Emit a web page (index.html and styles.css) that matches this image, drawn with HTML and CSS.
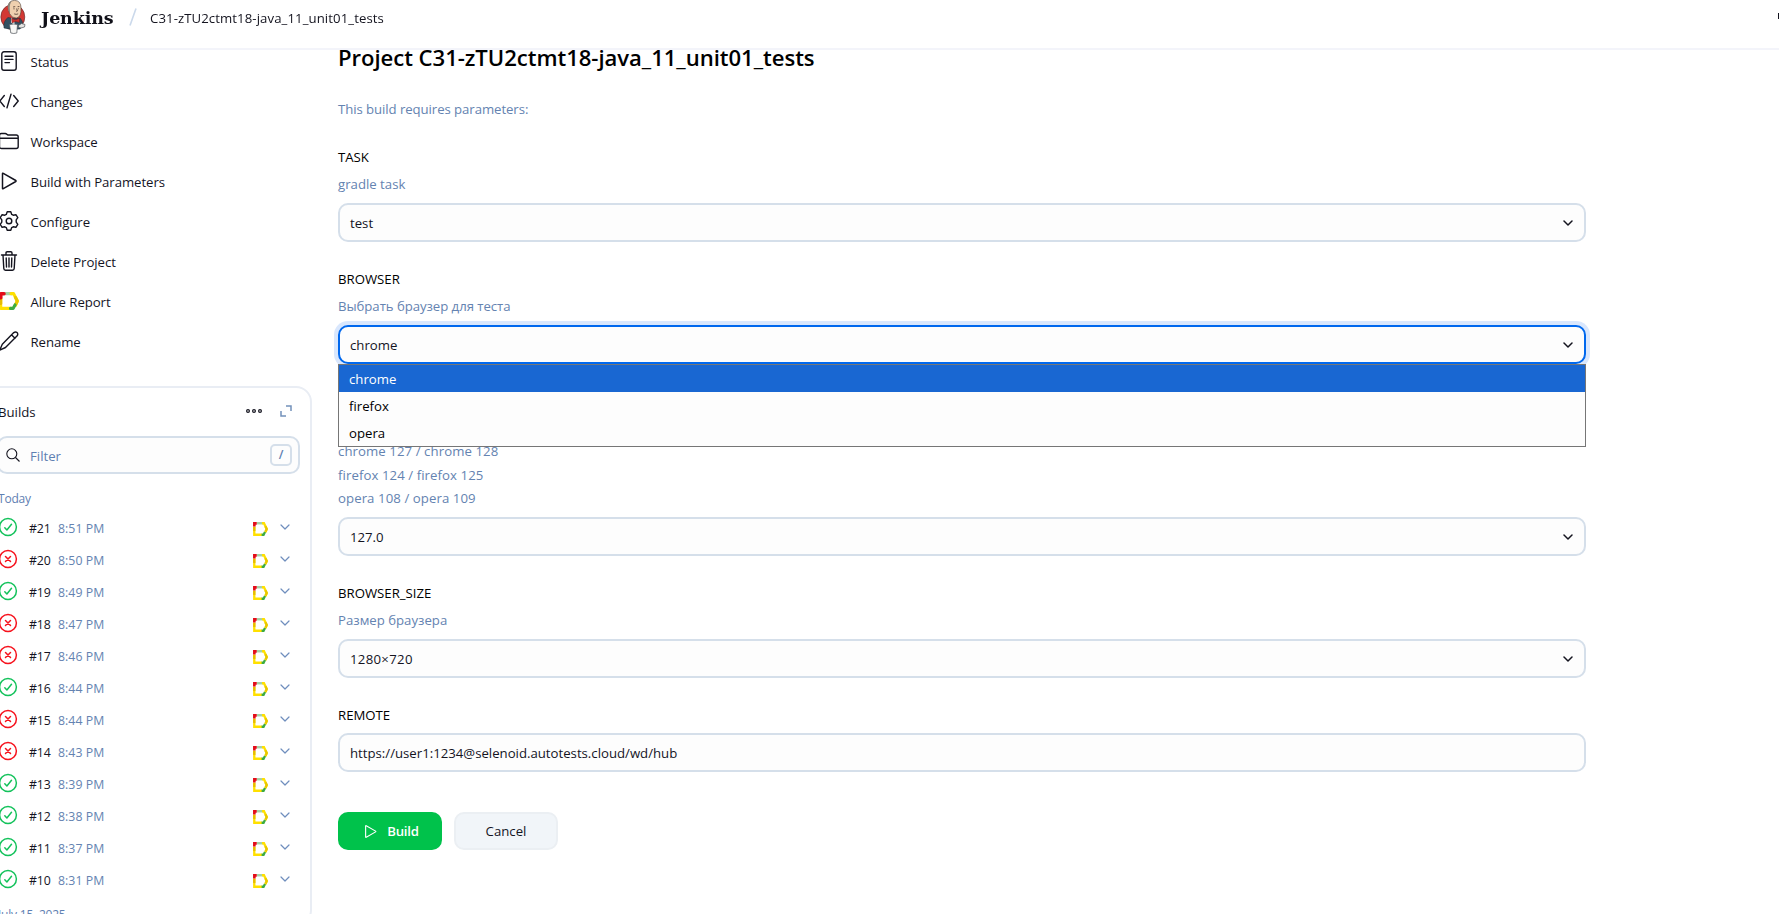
FILE: index.html
```
<!DOCTYPE html>
<html lang="en">
<head>
<meta charset="utf-8">
<title>Jenkins</title>
<link rel="stylesheet" href="styles.css">
</head>
<body>
<svg class="defs" aria-hidden="true">
  <symbol id="ok" viewBox="0 0 20 20"><g fill="none" stroke="#13c25b" stroke-linecap="round" stroke-linejoin="round"><circle cx="10" cy="10" r="8.4" stroke-width="1.5"/><path d="M6.8 10.7l2.1 2.2 4.6-5.6" stroke-width="1.5"/></g></symbol>
  <symbol id="bad" viewBox="0 0 20 20"><g fill="none" stroke="#f6121d" stroke-linecap="round"><circle cx="10" cy="10" r="8.4" stroke-width="1.5"/><path d="M7.5 7.5l5 5m0-5l-5 5" stroke-width="1.5"/></g></symbol>
  <symbol id="allure" viewBox="0 0 20 18" preserveAspectRatio="none"><g fill="none" stroke-width="3.1"><path d="M5 1.600h8" stroke="#a5d1a5"/><path d="M12 1.600h2.600L18.300 9l-2 4.500" stroke="#ffe000"/><path d="M16.500 5.500L18.300 9l-1.500 3.300" stroke="#e8c800"/><path d="M1.700 6v10.400h10.300" stroke="#ffe000"/><path d="M1.700 6v5.500" stroke="#e6bb00"/><path d="M11.500 16.400h2.600l1.900-3.500" stroke="#3cab43"/><path d="M5 1.800H1.800v4" stroke="#e40b18" stroke-width="3.500"/></g></symbol>
  <symbol id="chev" viewBox="0 0 10 6"><path d="M1 1l4 4 4-4" fill="none" stroke="currentColor" stroke-linecap="round" stroke-linejoin="round" stroke-width="var(--w,1.2)"/></symbol>
  <symbol id="play" viewBox="0 0 20 20"><path d="M3.500 2.800v14.400q0 .9.8.5l12.500-7.200q.7-.5 0-1l-12.500-7.200q-.8-.4-.8.5z" fill="none" stroke="currentColor" stroke-width="1.5" stroke-linejoin="round"/></symbol>
</svg>

<header class="header">
  <svg class="logo" viewBox="0 0 26 34">
    <ellipse cx="12.800" cy="17" rx="12" ry="12.600" fill="#d33833" stroke="#5d2a2a" stroke-width=".6"/>
    <path d="M4 28q-1-7 4-10.500l6 1 6-.5q3 3 3 7l-3 4q-10 1-16-1z" fill="#335061" stroke="#1c2f3a" stroke-width=".5"/>
    <path d="M8.500 8Q8 .5 14.500.4 21 .6 21 8q.6 9-4.500 10-4.500.5-7-4.500z" fill="#efd0af" stroke="#4a3c36" stroke-width=".6"/>
    <path d="M8.300 11Q6 2.500 12 .7 9.300 4 9.700 9.500l.300 3z" fill="#8b8278"/>
    <path d="M13 7l2.200-.4m2.400.1l1.800-.2M13.400 8.800h1.200m3.200 0h1M16.600 8.500l.8 2.500-1.200.3m-2 2.600q2 .9 4 0" stroke="#4a3730" stroke-width=".8" fill="none"/>
    <path d="M11 17.500l3 3 1 5-4-3z" fill="#fff"/>
    <path d="M11.500 18.500l4 1.300 4-1.600v4.200l-4-.9-3.500 1.400z" fill="#c9302c" stroke="#611" stroke-width=".4"/>
    <path d="M9.500 24.500q4-1 8 0l-.7 8.500q-3 1-6 0z" fill="#f7f7f5" stroke="#50545a" stroke-width=".7"/>
    <path d="M18.500 25.500l3-2 3.500 1-.5 2.500-3.500 1-2.500-.5z" fill="#e5e5e3" stroke="#50545a" stroke-width=".7"/>
  </svg>
  <span class="brand">Jenkins</span>
  <svg class="sep" viewBox="0 0 8 18"><path d="M7 .5L1 17.500" stroke="#cbd9eb" stroke-width="1.600"/></svg>
  <span class="crumb">C31-zTU2ctmt18-java_11_unit01_tests</span>
  <span class="edge"></span>
</header>

<div class="page">
<aside class="side">
  <nav class="tasks">
    <a class="task"><svg class="ico" viewBox="0 0 20 20"><rect x="2.800" y=".8" width="14.400" height="18.400" rx="2.200"/><path d="M6 5.200h8M6 8.400h8M6 11.600h4.500"/></svg><span>Status</span></a>
    <a class="task"><svg class="ico" viewBox="0 0 20 20"><path d="M5.300 4.500L.8 10l4.500 5.500M14.700 4.500l4.500 5.500-4.500 5.500M12 3.200L8 16.800"/></svg><span>Changes</span></a>
    <a class="task"><svg class="ico" viewBox="0 0 20 20"><path d="M.5 7V4.500q0-2 2-2h3.700q.8 0 1.500.6l.7.5q.5.400 1.300.4h7.500q2 0 2 2V15.500q0 2-2 2H2.500q-2 0-2-2zM.5 7.300h18.500"/></svg><span>Workspace</span></a>
    <a class="task"><svg class="ico"><use href="#play"/></svg><span>Build with Parameters</span></a>
    <a class="task"><svg class="ico" viewBox="0 0 20 20"><circle cx="10" cy="10" r="2.800"/><path d="M8.200.8h3.600l.9 2.600 1.500.8 2.700-.5 1.900 3-1.600 2.200v2.200l1.600 2.200-1.900 3-2.700-.5-1.500.8-.9 2.600H8.200l-.9-2.600-1.500-.8-2.700.5-1.900-3 1.600-2.200V8.900L1.200 6.700l1.900-3 2.700.5 1.500-.8z"/></svg><span>Configure</span></a>
    <a class="task"><svg class="ico" viewBox="0 0 20 20"><path d="M2.500 4h15M7 4V2q0-1.200 1.200-1.200h3.600Q13 .8 13 2v2M4 4l.8 13.500q.1 1.700 1.700 1.700h7q1.600 0 1.700-1.700L16 4M10 7v9M7.200 7l.3 9M12.800 7l-.3 9"/></svg><span>Delete Project</span></a>
    <a class="task"><svg class="ico allure-l"><use href="#allure"/></svg><span>Allure Report</span></a>
    <a class="task"><svg class="ico" viewBox="0 0 20 20"><path d="M14.800 1.600q1.800-1.400 3.200 0t.2 3.200L6.500 16.500.8 19l2.500-5.700zM12.700 4l3.300 3.300"/></svg><span>Rename</span></a>
  </nav>

  <section class="builds">
    <div class="bhead"><span class="btitle">Builds</span>
      <svg class="dots" viewBox="0 0 18 6"><g fill="none" stroke="#14141f" stroke-width="1.200"><circle cx="3" cy="3" r="1.400"/><circle cx="9" cy="3" r="1.400"/><circle cx="15" cy="3" r="1.400"/></g></svg>
      <svg class="expand" viewBox="0 0 12 12"><path d="M6 1h5v5M1 6v5h5" fill="none" stroke="#7391bb" stroke-width="1.500"/></svg>
    </div>
    <div class="filter"><svg class="mag" viewBox="0 0 14 14"><circle cx="5.800" cy="5.800" r="5" /><path d="M9.500 9.500l4 4"/></svg><span class="ftext">Filter</span><kbd class="key">/</kbd></div>
    <div class="day">Today</div>
    <ul class="list">
      <li class="row"><svg class="st"><use href="#ok"/></svg><b class="num">#21</b><span class="time">8:51 PM</span><svg class="al"><use href="#allure"/></svg><svg class="ch"><use href="#chev"/></svg></li>
      <li class="row"><svg class="st"><use href="#bad"/></svg><b class="num">#20</b><span class="time">8:50 PM</span><svg class="al"><use href="#allure"/></svg><svg class="ch"><use href="#chev"/></svg></li>
      <li class="row"><svg class="st"><use href="#ok"/></svg><b class="num">#19</b><span class="time">8:49 PM</span><svg class="al"><use href="#allure"/></svg><svg class="ch"><use href="#chev"/></svg></li>
      <li class="row"><svg class="st"><use href="#bad"/></svg><b class="num">#18</b><span class="time">8:47 PM</span><svg class="al"><use href="#allure"/></svg><svg class="ch"><use href="#chev"/></svg></li>
      <li class="row"><svg class="st"><use href="#bad"/></svg><b class="num">#17</b><span class="time">8:46 PM</span><svg class="al"><use href="#allure"/></svg><svg class="ch"><use href="#chev"/></svg></li>
      <li class="row"><svg class="st"><use href="#ok"/></svg><b class="num">#16</b><span class="time">8:44 PM</span><svg class="al"><use href="#allure"/></svg><svg class="ch"><use href="#chev"/></svg></li>
      <li class="row"><svg class="st"><use href="#bad"/></svg><b class="num">#15</b><span class="time">8:44 PM</span><svg class="al"><use href="#allure"/></svg><svg class="ch"><use href="#chev"/></svg></li>
      <li class="row"><svg class="st"><use href="#bad"/></svg><b class="num">#14</b><span class="time">8:43 PM</span><svg class="al"><use href="#allure"/></svg><svg class="ch"><use href="#chev"/></svg></li>
      <li class="row"><svg class="st"><use href="#ok"/></svg><b class="num">#13</b><span class="time">8:39 PM</span><svg class="al"><use href="#allure"/></svg><svg class="ch"><use href="#chev"/></svg></li>
      <li class="row"><svg class="st"><use href="#ok"/></svg><b class="num">#12</b><span class="time">8:38 PM</span><svg class="al"><use href="#allure"/></svg><svg class="ch"><use href="#chev"/></svg></li>
      <li class="row"><svg class="st"><use href="#ok"/></svg><b class="num">#11</b><span class="time">8:37 PM</span><svg class="al"><use href="#allure"/></svg><svg class="ch"><use href="#chev"/></svg></li>
      <li class="row"><svg class="st"><use href="#ok"/></svg><b class="num">#10</b><span class="time">8:31 PM</span><svg class="al"><use href="#allure"/></svg><svg class="ch"><use href="#chev"/></svg></li>
    </ul>
    <div class="day older">July 15, 2025</div>
  </section>
</aside>

<main class="main">
  <h1 class="title">Project C31-zTU2ctmt18-java_11_unit01_tests</h1>
  <p class="intro">This build requires parameters:</p>

  <div class="field"><div class="label">TASK</div><div class="desc">gradle task</div>
    <div class="box">test<svg class="arrow"><use href="#chev"/></svg></div></div>

  <div class="field"><div class="label">BROWSER</div><div class="desc ru">Выбрать браузер для теста</div>
    <div class="box focus">chrome<svg class="arrow"><use href="#chev"/></svg>
      <div class="menu"><div class="opt on">chrome</div><div class="opt">firefox</div><div class="opt">opera</div></div>
    </div></div>

  <div class="field versions"><div class="desc multi">chrome 127 / chrome 128<br>firefox 124 / firefox 125<br>opera 108 / opera 109</div>
    <div class="box">127.0<svg class="arrow"><use href="#chev"/></svg></div></div>

  <div class="field"><div class="label">BROWSER_SIZE</div><div class="desc">Размер браузера</div>
    <div class="box size">1280×720<svg class="arrow"><use href="#chev"/></svg></div></div>

  <div class="field remote"><div class="label">REMOTE</div>
    <div class="box">https://user1:1234@selenoid.autotests.cloud/wd/hub</div></div>

  <div class="actions">
    <button class="btn primary"><svg class="bplay"><use href="#play"/></svg>Build</button>
    <button class="btn">Cancel</button>
  </div>
</main>
</div>
</body>
</html>
```
FILE: styles.css
```
* { box-sizing: border-box; }
html, body { height: 100%; }
body {
  margin: 0;
  overflow: hidden;
  background: #fff;
  color: #14141f;
  font: 13.2px/20px "Open Sans", "Noto Sans", sans-serif;
  white-space: nowrap;
}
.defs { position: absolute; width: 0; height: 0; }
svg { display: block; flex: none; overflow: visible; }

.header {
  position: relative;
  z-index: 5;
  display: flex;
  align-items: flex-start;
  height: 50px;
  border-bottom: 2px solid #f3f4fa;
  background: rgba(255, 255, 255, .93);
  backdrop-filter: blur(7px);
}
.logo { width: 26px; height: 34px; }
.brand { margin: 5px 0 0 15px; width: 88px; font: bold 17.5px/26px "DejaVu Serif", serif; letter-spacing: -.15px; color: #101018; }
.sep { width: 8px; height: 18px; margin-top: 8px; }
.crumb { margin: 8px 0 0 13px; letter-spacing: .08px; }
.edge { width: 1px; height: 6px; margin: 13px 0 0 auto; background: #14141f; }

.page { display: flex; height: 864px; }
.side { flex: none; width: 312px; }
.tasks { margin-top: -8px; letter-spacing: -.07px; }
.task { display: flex; align-items: center; gap: 11.5px; height: 40px; margin-left: -1px; }
.ico { width: 20px; height: 20px; margin-top: -2px; fill: none; stroke: #14141f; stroke-width: 1.4; stroke-linejoin: round; stroke-linecap: round; }
.allure-l { stroke: none; height: 18px; }

.builds {
  margin: 24px 0 0 -16px;
  width: 328px;
  height: 540px;
  border: 2px solid #e9edf4;
  border-radius: 16px;
  padding: 14px 10px 0 15px;
}
.bhead { display: flex; align-items: center; height: 20px; }
.btitle { width: 247px; margin-left: -3px; }
.dots { width: 18px; height: 6px; margin-top: -3px; }
.expand { width: 12px; height: 12px; margin: -3px 0 0 17px; }
.filter {
  display: flex;
  align-items: center;
  height: 38px;
  margin: 14px 0 0 -4px;
  padding: 0 6px 0 7px;
  border: 2px solid #d5dfea;
  border-radius: 10px;
  background: #fdfdfd;
  color: #5f80b2;
}
.mag { width: 14px; height: 14px; margin-top: -1px; fill: none; stroke: #14141f; stroke-width: 1.1; }
.ftext { margin: 1px 0 0 10px; }
.key { width: 22px; height: 22px; margin-left: auto; border: 2px solid #d5dfea; border-radius: 5px; font: 600 12px/18px "Open Sans", sans-serif; text-align: center; }
.day { height: 20px; margin: 15px 0 0 -3px; font-size: 12px; line-height: 20px; letter-spacing: -.2px; color: #5f80b2; }
.older { margin-top: 9px; }
.list { list-style: none; margin: 3px 0 0; padding: 0; }
.row { display: flex; align-items: center; height: 32px; font-size: 12.3px; }
.st { width: 20px; height: 20px; margin: -3px 0 0 -3px; }
.num { width: 29px; margin: 1px 0 0 11px; font-weight: 400; letter-spacing: -.1px; }
.time { width: 195px; margin-top: 1px; letter-spacing: .05px; color: #6483b1; }
.al { width: 15px; height: 14px; margin-top: 1px; }
.ch { width: 10px; height: 6px; margin: -3px 0 0 12px; color: #6f8ebd; }

.main { width: 1248px; margin-left: 26px; }
.title { margin: -9px 0 0; font-size: 22.1px; line-height: 32px; font-weight: 600; letter-spacing: -.04px; color: #000; }
.intro { margin: 26px 0 0; color: #6483b1; letter-spacing: -.07px; }
.field { padding-top: 27px; }
.intro + .field { padding-top: 28px; }
.label { height: 20px; color: #000; }
.desc { margin-top: 7px; height: 20px; color: #6483b1; }
.ru { letter-spacing: -.05px; }
.box {
  position: relative;
  display: flex;
  align-items: center;
  height: 39px;
  margin-top: 9px;
  padding: 0 11px 0 10px;
  border: 2px solid #d5dfea;
  border-radius: 10px;
  background: #fdfdfd;
}
.remote .box { margin-top: 8px; }
.size { letter-spacing: .3px; }
.arrow { --w: 1.5; width: 10px; height: 6px; margin-left: auto; }
.focus { border-color: #0068ee; box-shadow: 0 0 0 4px #d9e7fd; }
.menu { position: absolute; z-index: 3; left: -2px; right: -2px; top: 37px; border: 1px solid #767676; background: #fdfdfd; color: #000; }
.opt { height: 27px; padding-left: 10px; line-height: 29px; }
.on { background: #1967d2; color: #fff; }
.versions { padding-top: 76px; }
.multi { margin-top: 0; height: 68px; line-height: 23.6px; letter-spacing: .08px; }
.actions { display: flex; gap: 12px; margin-top: 40px; }
.btn {
  display: flex;
  align-items: center;
  justify-content: center;
  width: 104px;
  height: 38px;
  border: 2px solid #ebeff3;
  border-radius: 10px;
  background: #f1f5f9;
  color: #14141f;
  font: 13.2px/20px "Open Sans", sans-serif;
}
.primary { padding: 0 5px 0 7px; border-color: #00c24b; background: #00c24b; color: #fff; font-weight: 600; letter-spacing: -.2px; }
.bplay { width: 15px; height: 15px; margin-right: 9px; }
```
